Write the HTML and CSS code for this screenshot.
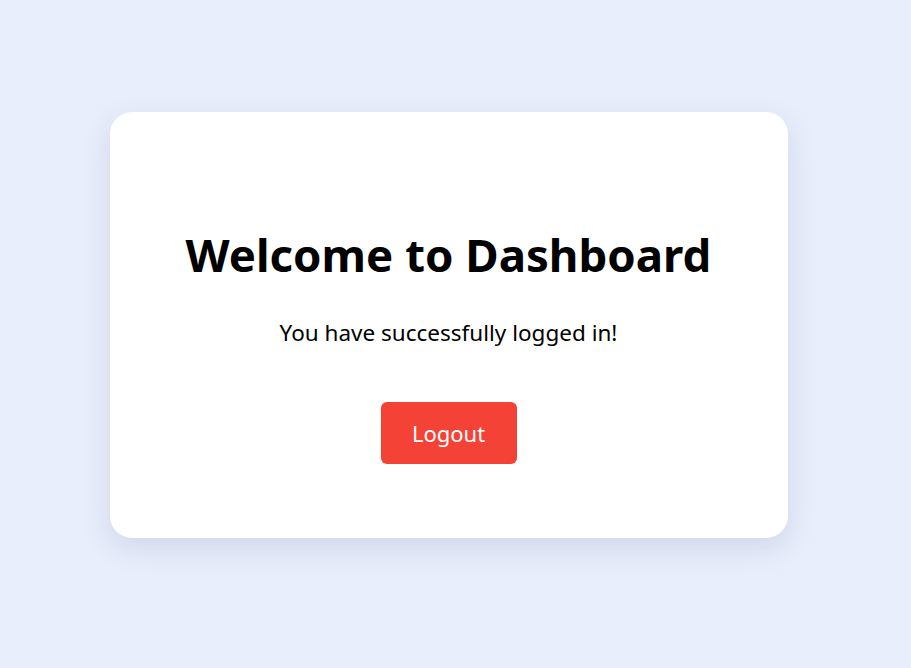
FILE: index.html
```html
<!DOCTYPE html>
<html lang="en">
<head>
<meta charset="utf-8">
<title>Dashboard</title>
<link rel="stylesheet" href="styles.css">
</head>
<body>
<main class="page">
  <section class="card">
    <h1 class="title">Welcome to Dashboard</h1>
    <p class="subtitle">You have successfully logged in!</p>
    <button class="logout" type="button">Logout</button>
  </section>
</main>
</body>
</html>
```
FILE: styles.css
```css
html, body {
  margin: 0;
  padding: 0;
  height: 100%;
}
body {
  background: #e8eefb;
  font-family: "Noto Sans", "Open Sans", sans-serif;
  color: #000;
}
.page {
  box-sizing: border-box;
  height: 100%;
  display: flex;
  justify-content: center;
  align-items: flex-start;
  padding-top: 112px;
  padding-right: 14px;
}
.card {
  box-sizing: border-box;
  width: 678px;
  height: 426px;
  background: #fff;
  border-radius: 22px;
  box-shadow: 0 10px 30px rgba(30, 50, 100, 0.12);
  display: flex;
  flex-direction: column;
  align-items: center;
  padding-top: 110px;
}
.title {
  margin: 0;
  font-size: 45.6px;
  font-weight: 700;
  line-height: 64px;
}
.subtitle {
  margin: 32px 0 0;
  font-size: 22.5px;
  line-height: 30px;
}
.logout {
  margin-top: 54px;
  width: 136px;
  height: 62px;
  border: none;
  border-radius: 6px;
  background: #f44336;
  color: #fff;
  font-family: inherit;
  font-size: 22px;
  cursor: pointer;
}
```
